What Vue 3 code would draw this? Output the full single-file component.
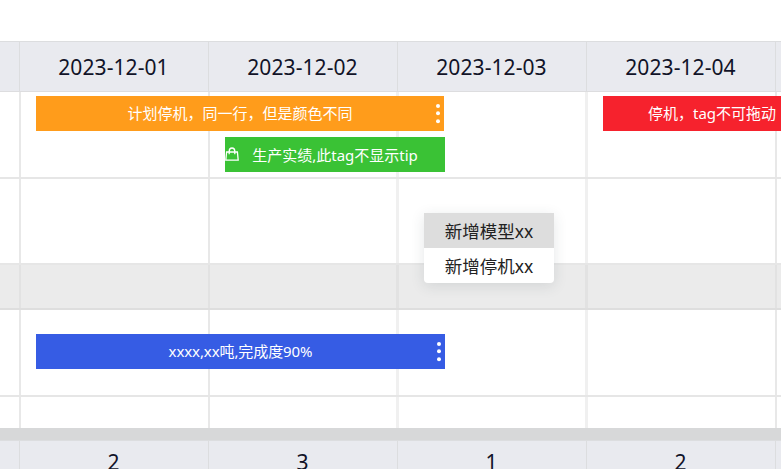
<script setup>
const days = ['', '2023-12-01', '2023-12-02', '2023-12-03', '2023-12-04', '']
const totals = ['', '2', '3', '1', '2', '']
const rows = ['first', 'second', 'closed', 'work', 'last']
const tags = [
  { id: 'plan', text: '计划停机，同一行，但是颜色不同', more: true },
  { id: 'actual', text: '生产实绩,此tag不显示tip', bag: true },
  { id: 'stop', text: '停机，tag不可拖动' },
  { id: 'model', text: 'xxxx,xx吨,完成度90%', more: true },
]
</script>

<template>
  <main class="gantt">
    <header class="days band">
      <div v-for="(d, i) in days" :key="i" class="cell">{{ d }}</div>
    </header>
    <section class="body">
      <div v-for="r in rows" :key="r" class="row" :class="r">
        <div v-for="(d, i) in days" :key="i" class="slot"></div>
      </div>
      <div v-for="t in tags" :key="t.id" class="tag" :class="t.id">
        <svg v-if="t.bag" class="bag" viewBox="0 0 14 15" fill="none" stroke="currentColor" stroke-width="1.3">
          <path d="M1.6 5h10.8l.8 8.2H.8zM4.2 7.2V4.2C4.2 2.3 5.3 1 7 1s2.8 1.3 2.8 3.2v3" />
        </svg>
        <span class="label">{{ t.text }}</span>
        <svg v-if="t.more" class="more" viewBox="0 0 4 20" fill="currentColor">
          <circle cx="2" cy="2" r="2" /><circle cx="2" cy="9.3" r="2" /><circle cx="2" cy="17.2" r="2" />
        </svg>
      </div>
      <div class="menu">
        <div class="item active">新增模型xx</div>
        <div class="item">新增停机xx</div>
      </div>
    </section>
    <div class="scroll"></div>
    <footer class="totals band">
      <div v-for="(n, i) in totals" :key="i" class="cell">{{ n }}</div>
    </footer>
  </main>
</template>

<style>
body { background: #fff; overflow: hidden; }
</style>

<style scoped>
.gantt {
  box-sizing: border-box;
  width: 781px;
  height: 469px;
  padding-top: 41px;
  overflow: hidden;
  position: relative;
  display: flex;
  flex-direction: column;
  font-family: "Noto Sans", "Noto Sans CJK SC", sans-serif;
}
.band, .row {
  display: grid;
  grid-template-columns: 20px repeat(4, 189px) 189px;
  box-sizing: border-box;
  flex: none;
}
.band { background: #e9eaef; border-top: 1px solid #dcdddf; color: #111328; font-size: 21px; }
.cell { border-right: 1px solid #dcdddf; text-align: center; }
.days .cell { padding-right: 1px; letter-spacing: .08px; }
.days { height: 51px; border-bottom: 1px solid #dddddf; line-height: 50px; }
.totals { height: 50px; line-height: 42px; }
.totals .cell { padding-right: 1px; }
.body { position: relative; height: 336px; flex: none; }
.row { border-bottom: 2px solid #e6e6e6; }
.slot { border-right: 2px solid #e8e8e8; position: relative; left: 1px; }
.slot:nth-child(3), .slot:nth-child(4) { border-right: 3px solid #f0f0f0; }
.first { height: 87px; }
.second { height: 86px; }
.closed { height: 45px; background: #ebebeb; border-bottom-color: #dedede; }
.closed .slot:nth-child(n) { border-right-color: #e2e2e2; }
.work { height: 87px; }
.last { height: 31px; border-bottom: 0; }
.tag {
  position: absolute;
  box-sizing: border-box;
  height: 35px;
  display: flex;
  align-items: center;
  justify-content: center;
  color: #fff;
  font-size: 15px;
  line-height: 35px;
  white-space: nowrap;
}
.plan { left: 36px; top: 4px; width: 408px; background: #ff9c1b; }
.actual { left: 225px; top: 45px; width: 220px; padding-top: 1px; background: #3ac235; }
.stop { left: 603px; top: 4px; width: 218px; background: #f6222d; }
.model { left: 36px; top: 242px; width: 409px; background: #365ce4; }
.model .label { letter-spacing: -.1px; }
.bag { position: absolute; left: 0; top: 10px; width: 14px; height: 15px; }
.more { position: absolute; right: 4px; top: 8px; width: 4px; height: 20px; }
.menu {
  position: absolute;
  left: 424px;
  top: 121px;
  width: 130px;
  height: 70px;
  border-radius: 0 0 4px 4px;
  background: #fff;
  box-shadow: 0 3px 14px rgba(50, 60, 70, .13);
}
.item { height: 35px; line-height: 36px; text-align: center; color: #222; font-size: 17.5px; }
.active { background: #ddd; }
.scroll { height: 12px; flex: none; background: #d7d8d9; }
</style>
